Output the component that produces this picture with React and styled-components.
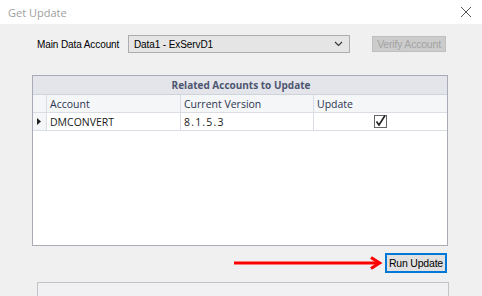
import styled, { createGlobalStyle } from "styled-components";

const GlobalStyle = createGlobalStyle`
	html, body {
		margin: 0;
		padding: 0;
		width: 482px;
		height: 296px;
		overflow: hidden;
		background: #f0f0f0;
	}
	* {
		box-sizing: border-box;
	}
`;

const Window = styled.div`
	display: flex;
	flex-direction: column;
	width: 482px;
	height: 296px;
	font-family: "Liberation Sans", Arial, sans-serif;
	font-size: 11px;
	color: #000;
	overflow: hidden;
`;

const TitleBar = styled.div`
	display: flex;
	align-items: center;
	justify-content: space-between;
	height: 24px;
	padding: 0 8px 0 8px;
	background: #fff;
`;

const Title = styled.span`
	font-family: "Open Sans", "Noto Sans", sans-serif;
	font-size: 11px;
	color: #a0a0a0;
`;

const CloseBtn = styled.span`
	display: flex;
	align-items: center;
	width: 12px;
	height: 12px;
	margin-right: 2px;
`;

const Body = styled.div`
	flex: 1;
	display: flex;
	flex-direction: column;
	background: #f0f0f0;
`;

const AccountRow = styled.div`
	display: flex;
	align-items: center;
	margin-top: 11px;
	padding-left: 37px;
	height: 18px;
`;

const Label = styled.span`
	width: 91px;
	font-size: 10px;
	letter-spacing: -0.1px;
`;

const Combo = styled.div`
	display: flex;
	align-items: center;
	justify-content: space-between;
	width: 222px;
	height: 18px;
	padding: 0 6px 0 5px;
	background: #e5e5e5;
	border: 1px solid #adadad;
	font-size: 10px;
	letter-spacing: -0.1px;
`;

const WinButton = styled.button`
	display: flex;
	align-items: center;
	justify-content: center;
	height: ${({ $h }) => $h}px;
	width: ${({ $w }) => $w}px;
	padding: 0;
	font-family: "Liberation Sans", Arial, sans-serif;
	font-size: 10.5px;
	letter-spacing: -0.2px;
	color: ${({ $disabled }) => ($disabled ? "#a3a3a3" : "#000")};
	background: ${({ $disabled }) => ($disabled ? "#cccccc" : "#e1e1e1")};
	border: 1px solid ${({ $disabled }) => ($disabled ? "#bfbfbf" : "#0078d7")};
	box-shadow: ${({ $disabled }) => ($disabled ? "none" : "inset 0 0 0 1px #0078d7")};
`;

const VerifyWrap = styled.div`
	margin-left: 22px;
`;

const Grid = styled.div`
	display: flex;
	flex-direction: column;
	margin: 22px 0 0 32px;
	width: 416px;
	height: 171px;
	background: #fff;
	border: 1px solid #a9abb6;
	font-family: "Open Sans", "Noto Sans", sans-serif;
	font-size: 10.5px;
`;

const GroupHeader = styled.div`
	display: flex;
	align-items: center;
	justify-content: center;
	height: 19px;
	background: #e3e5ea;
	border-bottom: 1px solid #cfd3da;
	font-weight: bold;
	font-size: 10px;
	color: #4e5670;
	padding-left: 2px;
`;

const Row = styled.div`
	display: grid;
	grid-template-columns: 14px 134px 133px 1fr;
	height: ${({ $h }) => $h}px;
	background: ${({ $head }) => ($head ? "#f5f6f8" : "#fff")};
	border-bottom: 1px solid #dadde3;
`;

const Cell = styled.div`
	display: flex;
	align-items: center;
	justify-content: ${({ $center }) => ($center ? "center" : "flex-start")};
	padding-left: ${({ $center }) => ($center ? "0" : "3px")};
	border-right: ${({ $last }) => ($last ? "none" : "1px solid #dadde3")};
	color: ${({ $head }) => ($head ? "#2b3550" : "#1a1a1a")};
	background: ${({ $rowhead }) => ($rowhead ? "#f5f6f8" : "transparent")};
	letter-spacing: ${({ $spaced }) => ($spaced ? "1.2px" : "0")};
`;

const Footer = styled.div`
	display: flex;
	align-items: center;
	justify-content: flex-end;
	margin-top: 6px;
	width: 447px;
	height: 21px;
	gap: 2px;
`;

const BottomPanel = styled.div`
	margin: 9px 0 0 37px;
	width: 412px;
	flex: 1;
	background: #f1f1f3;
	border: 1px solid #c4c4c8;
	border-bottom: none;
`;

function CloseIcon() {
	return (
		<CloseBtn>
			<svg width="12" height="12" viewBox="0 0 12 12">
				<path d="M1 1 L11 11 M11 1 L1 11" stroke="#555" strokeWidth="1" fill="none" />
			</svg>
		</CloseBtn>
	);
}

function Chevron() {
	return (
		<svg width="9" height="6" viewBox="0 0 9 6">
			<path d="M1 1 L4.5 4.5 L8 1" stroke="#333" strokeWidth="1.1" fill="none" />
		</svg>
	);
}

function CheckBox() {
	return (
		<svg width="13" height="13" viewBox="0 0 13 13">
			<rect x="0.5" y="0.5" width="12" height="12" fill="#fff" stroke="#666" />
			<path d="M2.5 6.5 L5 10 L11 0.5" stroke="#222" strokeWidth="1.6" fill="none" />
		</svg>
	);
}

function RowArrow() {
	return (
		<svg width="5" height="7" viewBox="0 0 5 7">
			<path d="M0 0 L4 3.5 L0 7 Z" fill="#222" />
		</svg>
	);
}

function RedArrow() {
	return (
		<svg width="149" height="14" viewBox="0 0 149 14">
			<path d="M0 7 L145 7" stroke="#ff0000" strokeWidth="3" />
			<path d="M137 1.5 L145.5 7 L137 12.5" stroke="#ff0000" strokeWidth="3.2" fill="none" />
		</svg>
	);
}

export default function App() {
	return (
		<>
			<GlobalStyle />
			<Window>
				<TitleBar>
					<Title>Get Update</Title>
					<CloseIcon />
				</TitleBar>
				<Body>
					<AccountRow>
						<Label>Main Data Account</Label>
						<Combo>
							<span>Data1 - ExServD1</span>
							<Chevron />
						</Combo>
						<VerifyWrap>
							<WinButton $w={74} $h={16} $disabled>
								Verify Account
							</WinButton>
						</VerifyWrap>
					</AccountRow>
					<Grid>
						<GroupHeader>Related Accounts to Update</GroupHeader>
						<Row $h={18} $head>
							<Cell $rowhead />
							<Cell $head>Account</Cell>
							<Cell $head>Current Version</Cell>
							<Cell $head $last>Update</Cell>
						</Row>
						<Row $h={18}>
							<Cell $rowhead $center>
								<RowArrow />
							</Cell>
							<Cell>DMCONVERT</Cell>
							<Cell $spaced>8.1.5.3</Cell>
							<Cell $center $last>
								<CheckBox />
							</Cell>
						</Row>
					</Grid>
					<Footer>
						<RedArrow />
						<WinButton $w={62} $h={20}>Run Update</WinButton>
					</Footer>
					<BottomPanel />
				</Body>
			</Window>
		</>
	);
}
